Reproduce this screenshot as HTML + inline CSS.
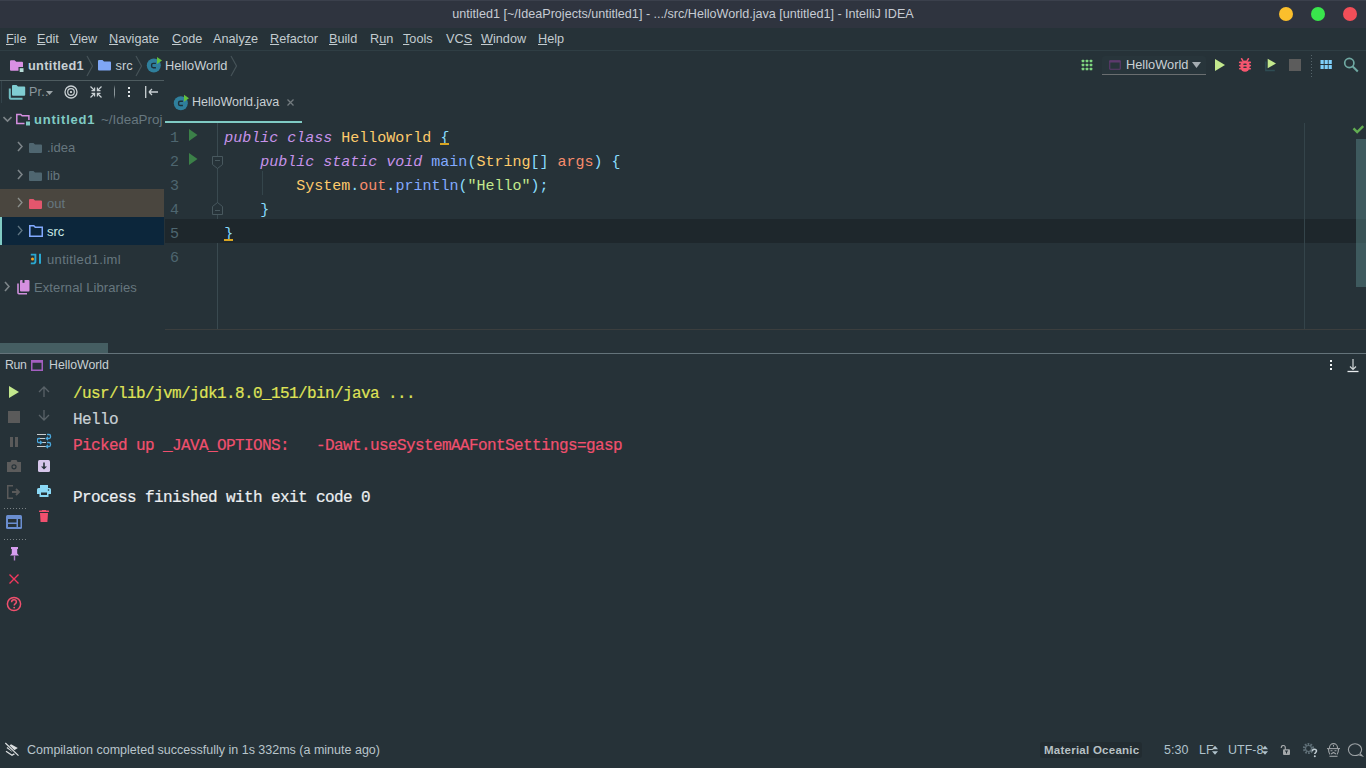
<!DOCTYPE html>
<html><head><meta charset="utf-8">
<style>
*{margin:0;padding:0;box-sizing:border-box}
html,body{width:1366px;height:768px;overflow:hidden;background:#263238;font-family:"Liberation Sans",sans-serif;font-size:13px;color:#b0bec5}
.a{position:absolute;white-space:pre}
.mono{font-family:"Liberation Mono",monospace}
#title{left:0;top:0;width:1366px;height:28px;background:#2f343f}
#menu{left:0;top:28px;width:1366px;height:22px;background:#263238}
.mi{top:32px;font-size:12.7px;color:#c3ccd0}
.mi u{text-decoration:underline;text-decoration-thickness:1px;text-underline-offset:1px}
</style></head><body>
<div id="title" class="a"></div><div class="a" style="left:0;top:0;width:1366px;height:1px;background:#3b404c"></div>
<div class="a" style="left:0;top:7px;width:1366px;text-align:center;font-size:12.6px;color:#c6cbd3">untitled1 [~/IdeaProjects/untitled1] - .../src/HelloWorld.java [untitled1] - IntelliJ IDEA</div>
<div class="a" style="left:1279px;top:7px;width:14px;height:14px;border-radius:7px;background:#fbbf2c"></div>
<div class="a" style="left:1311px;top:7px;width:14px;height:14px;border-radius:7px;background:#39e64c"></div>
<div class="a" style="left:1343px;top:7px;width:14px;height:14px;border-radius:7px;background:#f24e58"></div>

<div id="menu" class="a"></div>
<div class="a mi" style="left:6px"><u>F</u>ile</div>
<div class="a mi" style="left:37px"><u>E</u>dit</div>
<div class="a mi" style="left:70px"><u>V</u>iew</div>
<div class="a mi" style="left:109px"><u>N</u>avigate</div>
<div class="a mi" style="left:172px"><u>C</u>ode</div>
<div class="a mi" style="left:213px">Analy<u>z</u>e</div>
<div class="a mi" style="left:270px"><u>R</u>efactor</div>
<div class="a mi" style="left:329px"><u>B</u>uild</div>
<div class="a mi" style="left:370px">R<u>u</u>n</div>
<div class="a mi" style="left:403px"><u>T</u>ools</div>
<div class="a mi" style="left:446px">VC<u>S</u></div>
<div class="a mi" style="left:481px"><u>W</u>indow</div>
<div class="a mi" style="left:538px"><u>H</u>elp</div>
<div class="a" style="left:0;top:50px;width:1366px;height:1px;background:#2f3e44"></div>


<!-- NAV BAR -->
<svg class="a" style="left:10px;top:60px" width="15" height="13" viewBox="0 0 15 13"><path d="M0 1.2a1 1 0 0 1 1-1h3.6l1.6 1.6H12a1 1 0 0 1 1 1V9.8a1 1 0 0 1-1 1H1a1 1 0 0 1-1-1z" fill="#d990e4"/><rect x="8.5" y="7" width="6" height="6" fill="#263238"/><rect x="9.7" y="8.2" width="3.8" height="3.8" fill="#b7dcd7"/></svg>
<div class="a" style="left:28px;top:58px;font-weight:bold;font-size:12.8px;letter-spacing:0.3px;color:#c8d0d4">untitled1</div>
<svg class="a" style="left:86px;top:55px" width="8" height="22"><path d="M1 1l5.5 10L1 21" stroke="#465358" stroke-width="1.2" fill="none"/></svg>
<svg class="a" style="left:98px;top:60px" width="13" height="11" viewBox="0 0 13 11"><path d="M0 1a1 1 0 0 1 1-1h3.5l1.5 1.5h6a1 1 0 0 1 1 1V9.5a1 1 0 0 1-1 1H1a1 1 0 0 1-1-1z" fill="#7fa6f5"/></svg>
<div class="a" style="left:115.5px;top:58px;font-size:12.8px;color:#c8d0d4">src</div>
<svg class="a" style="left:135px;top:55px" width="8" height="22"><path d="M1 1l5.5 10L1 21" stroke="#465358" stroke-width="1.2" fill="none"/></svg>
<svg class="a" style="left:146px;top:57px" width="17" height="16" viewBox="0 0 17 16"><circle cx="7.8" cy="8.5" r="7" fill="#2f7f9c"/><path d="M9.9 6.4H7.2a1.6 1.6 0 0 0-1.6 1.6v1.1a1.6 1.6 0 0 0 1.6 1.6H9.9" stroke="#1f3038" stroke-width="1.4" fill="none"/><path d="M11 0v7l5-3.5z" fill="#62c03e"/></svg>
<div class="a" style="left:165px;top:58px;font-size:12.8px;color:#c8d0d4">HelloWorld</div>
<svg class="a" style="left:230px;top:55px" width="8" height="22"><path d="M1 1l5.5 10L1 21" stroke="#465358" stroke-width="1.2" fill="none"/></svg>
<div class="a" style="left:0;top:80px;width:164px;height:1px;background:#4e5c60"></div>

<!-- right toolbar -->
<svg class="a" style="left:1081px;top:59px" width="12" height="12" fill="#7fd67f"><rect x="0.7" y="0.7" width="2.6" height="2.6" rx="0.6"/><rect x="0.7" y="4.7" width="2.6" height="2.6" rx="0.6"/><rect x="0.7" y="8.7" width="2.6" height="2.6" rx="0.6"/><rect x="4.7" y="0.7" width="2.6" height="2.6" rx="0.6"/><rect x="4.7" y="4.7" width="2.6" height="2.6" rx="0.6"/><rect x="4.7" y="8.7" width="2.6" height="2.6" rx="0.6"/><rect x="8.7" y="0.7" width="2.6" height="2.6" rx="0.6"/><rect x="8.7" y="4.7" width="2.6" height="2.6" rx="0.6"/><rect x="8.7" y="8.7" width="2.6" height="2.6" rx="0.6"/></svg>
<div class="a" style="left:1102px;top:56px;width:104px;height:18px;background:#28353b;border-radius:3px 3px 0 0"></div><div class="a" style="left:1102px;top:74px;width:104px;height:1px;background:#6a6e70"></div>
<svg class="a" style="left:1109px;top:60px" width="12" height="10"><rect x="0.75" y="0.75" width="10.5" height="8.5" rx="0.5" fill="none" stroke="#5e3a6e" stroke-width="1.1"/><rect x="0.5" y="0.5" width="11" height="2" fill="#5e3a6e"/></svg>
<div class="a" style="left:1126px;top:57px;font-size:12.8px;color:#c8d0d4">HelloWorld</div>
<svg class="a" style="left:1192px;top:62px" width="9" height="6"><path d="M0 0h9l-4.5 6z" fill="#a5adb2"/></svg>
<svg class="a" style="left:1215px;top:59px" width="10" height="12"><path d="M0 0l10 6-10 6z" fill="#c3e88d"/></svg>
<svg class="a" style="left:1238px;top:58px" width="14" height="14" viewBox="0 0 14 14"><g fill="#f5566f"><ellipse cx="7" cy="8.1" rx="4.7" ry="5.7"/><rect x="0.9" y="3.6" width="12.2" height="1.6" rx="0.8"/><rect x="0.9" y="6.8" width="12.2" height="1.6" rx="0.8"/><rect x="0.9" y="9.9" width="12.2" height="1.6" rx="0.8"/></g><path d="M3.6 0.8l1.2 1.8M10.4 0.8l-1.2 1.8" stroke="#f5566f" stroke-width="1.6" stroke-linecap="round"/><ellipse cx="7" cy="6.3" rx="1.9" ry="0.75" fill="#263238"/><ellipse cx="7" cy="9.3" rx="1.9" ry="0.75" fill="#263238"/></svg>
<svg class="a" style="left:1264px;top:58px" width="14" height="14"><path d="M1.8 3.5v9h9" stroke="#2f4d54" stroke-width="1.4" fill="none"/><path d="M3.7 0.8l8.3 4.7-8.3 4.7z" fill="#c3e88d"/></svg>
<div class="a" style="left:1289px;top:59px;width:12px;height:12px;background:#5c5c5c"></div>
<div class="a" style="left:1311px;top:55px;width:1px;height:22px;background:repeating-linear-gradient(#56656b 0 1px,transparent 1px 3px)"></div>
<svg class="a" style="left:1320px;top:60px" width="12" height="9" fill="#7fd0fa"><rect x="0.5" y="0" width="3.2" height="4"/><rect x="4.6" y="0" width="3.2" height="4"/><rect x="8.6" y="0" width="3.2" height="4"/><rect x="0.5" y="5" width="3.2" height="4"/><rect x="4.6" y="5" width="3.2" height="4"/><rect x="8.6" y="5" width="3.2" height="4"/></svg>
<svg class="a" style="left:1342px;top:56px" width="17" height="17"><circle cx="7.3" cy="7" r="4.6" stroke="#6fa8a2" stroke-width="1.7" fill="none"/><path d="M10.5 10.3l5.3 5.2" stroke="#6fa8a2" stroke-width="2"/></svg>

<!-- PROJECT PANEL -->
<div class="a" style="left:1px;top:81px;width:1px;height:22px;background:#33434a"></div>
<svg class="a" style="left:8px;top:84px" width="19" height="16" viewBox="0 0 19 16"><path d="M1.8 4.5v9.2a1 1 0 0 0 1 1H14.5" stroke="#72bfc3" stroke-width="2" fill="none"/><path d="M4 2a1 1 0 0 1 1-1h3.5l1.5 1.5h6.2a1 1 0 0 1 1 1V10.8a1 1 0 0 1-1 1H5a1 1 0 0 1-1-1z" fill="#80cdd2"/></svg>
<div class="a" style="left:29px;top:85px;font-size:12.6px;letter-spacing:0.2px;color:#8a979d">Pr..</div>
<svg class="a" style="left:46px;top:91px" width="7" height="4"><path d="M0 0h7l-3.5 4z" fill="#9aa3a7"/></svg>
<svg class="a" style="left:64px;top:85px" width="14" height="14"><circle cx="7" cy="7" r="6" stroke="#c9d0d3" stroke-width="1.3" fill="none"/><circle cx="7" cy="7" r="3.3" stroke="#c9d0d3" stroke-width="1.2" fill="none"/><circle cx="7" cy="7" r="1.1" fill="#e0e4e6"/></svg>
<svg class="a" style="left:90px;top:86px" width="12" height="12" stroke="#c9d0d3" stroke-width="1.2" fill="none"><path d="M0.5 0.5l4 4M1.5 4.6h3.1V1.5M11.5 0.5l-4 4M10.5 4.6H7.4V1.5M0.5 11.5l4-4M1.5 7.4h3.1v3.1M11.5 11.5l-4-4M10.5 7.4H7.4v3.1"/></svg>
<div class="a" style="left:114px;top:85px;width:1px;height:14px;background:linear-gradient(#263238,#8c979b 30%,#8c979b 70%,#263238)"></div>
<div class="a" style="left:128px;top:87px;width:2px;height:2px;background:#e0e4e6"></div>
<div class="a" style="left:128px;top:91px;width:2px;height:2px;background:#e0e4e6"></div>
<div class="a" style="left:128px;top:95px;width:2px;height:2px;background:#e0e4e6"></div>
<svg class="a" style="left:145px;top:86px" width="13" height="12" stroke="#c9d0d3" stroke-width="1.3" fill="none"><path d="M0.7 0v12M4 6h9M4 6l3-3M4 6l3 3"/></svg>

<!-- tree -->
<svg class="a" style="left:3px;top:116px" width="9" height="7"><path d="M0.5 1l4 4 4-4" stroke="#7d8589" stroke-width="1.6" fill="none"/></svg>
<svg class="a" style="left:16px;top:113px" width="15" height="13" viewBox="0 0 15 13"><path d="M0.8 1.5h4l1.3 1.3h6.8V10.5H0.8z" stroke="#d58fe0" stroke-width="1.5" fill="none"/><rect x="8.5" y="7" width="6.5" height="6" fill="#263238"/><rect x="10" y="8.5" width="4" height="4" fill="#80cbc4"/></svg>
<div class="a" style="left:34px;top:112px;font-weight:bold;font-size:13px;letter-spacing:0.8px;color:#80cbc4">untitled1</div>
<div class="a" style="left:101px;top:112px;font-size:13.4px;color:#66777f;width:63px;overflow:hidden">~/IdeaProj</div>

<div class="a" style="left:0;top:189px;width:164px;height:28px;background:#4a463f"></div>
<div class="a" style="left:0;top:217px;width:164px;height:28px;background:#0c263b"></div>
<div class="a" style="left:0;top:217px;width:2px;height:28px;background:#80cbc4"></div>

<svg class="a" style="left:17px;top:141px" width="6" height="11"><path d="M1 1l4 4.5-4 4.5" stroke="#7d8589" stroke-width="1.6" fill="none"/></svg>
<svg class="a" style="left:29px;top:143px" width="13" height="10"><path d="M0 1a1 1 0 0 1 1-1h3.5l1.5 1.5h6a1 1 0 0 1 1 1V9a1 1 0 0 1-1 1H1a1 1 0 0 1-1-1z" fill="#4f6670" transform="translate(0,0)"/></svg>
<div class="a" style="left:47px;top:140px;font-size:13px;color:#66777f">.idea</div>

<svg class="a" style="left:17px;top:169px" width="6" height="11"><path d="M1 1l4 4.5-4 4.5" stroke="#7d8589" stroke-width="1.6" fill="none"/></svg>
<svg class="a" style="left:29px;top:171px" width="13" height="10"><path d="M0 1a1 1 0 0 1 1-1h3.5l1.5 1.5h6a1 1 0 0 1 1 1V9a1 1 0 0 1-1 1H1a1 1 0 0 1-1-1z" fill="#4f6670"/></svg>
<div class="a" style="left:47px;top:168px;font-size:13px;color:#66777f">lib</div>

<svg class="a" style="left:17px;top:197px" width="6" height="11"><path d="M1 1l4 4.5-4 4.5" stroke="#8a8f8c" stroke-width="1.3" fill="none"/></svg>
<svg class="a" style="left:29px;top:199px" width="13" height="10"><path d="M0 1a1 1 0 0 1 1-1h3.5l1.5 1.5h6a1 1 0 0 1 1 1V9a1 1 0 0 1-1 1H1a1 1 0 0 1-1-1z" fill="#e3566d"/></svg>
<div class="a" style="left:47px;top:196px;font-size:13px;color:#66777f">out</div>

<svg class="a" style="left:17px;top:225px" width="6" height="11"><path d="M1 1l4 4.5-4 4.5" stroke="#5f7582" stroke-width="1.3" fill="none"/></svg>
<svg class="a" style="left:29px;top:225px" width="14" height="12"><path d="M0.8 0.8h4l1.5 1.5h7V11.2H0.8z" stroke="#82aaff" stroke-width="1.6" fill="none"/></svg>
<div class="a" style="left:47px;top:224px;font-size:13px;color:#c9e9e6">src</div>

<svg class="a" style="left:30px;top:253px" width="13" height="12"><path d="M0.8 1.6h4.6v6.6a2.2 2.2 0 0 1-2.2 2.2H0.8" stroke="#2aa8d0" stroke-width="1.9" fill="none"/><circle cx="2.5" cy="6" r="1.5" fill="#f5a623"/><path d="M10 0.8v10" stroke="#2aa8d0" stroke-width="2"/></svg>
<div class="a" style="left:47px;top:252px;font-size:13px;letter-spacing:0.35px;color:#66777f">untitled1.iml</div>

<svg class="a" style="left:4px;top:281px" width="6" height="11"><path d="M1 1l4 4.5-4 4.5" stroke="#7d8589" stroke-width="1.6" fill="none"/></svg>
<svg class="a" style="left:16px;top:279px" width="15" height="16"><path d="M2 4.5v9.3a1 1 0 0 0 1 1H11" stroke="#cf8fdc" stroke-width="1.6" fill="none"/><path d="M4 2a1 1 0 0 1 1-1h7.5a1 1 0 0 1 1 1v9.5a1 1 0 0 1-1 1H5a1 1 0 0 1-1-1z" fill="#d690e0"/><path d="M6.5 1v2.8h2V1z" fill="#263238"/></svg>
<div class="a" style="left:34px;top:280px;font-size:13px;letter-spacing:0.1px;color:#66777f">External Libraries</div>

<div class="a" style="left:0;top:343px;width:108px;height:10px;background:#455e62"></div>
<div class="a" style="left:164px;top:81px;width:1px;height:272px;background:#263238"></div>

<!-- EDITOR -->
<svg class="a" style="left:173px;top:94px" width="17" height="17" viewBox="0 0 17 17"><circle cx="7.8" cy="9.3" r="7" fill="#2f7f9c"/><path d="M9.9 7.2H7.2a1.6 1.6 0 0 0-1.6 1.6v1.1a1.6 1.6 0 0 0 1.6 1.6H9.9" stroke="#1f3038" stroke-width="1.4" fill="none"/><path d="M11 0.8v7l5-3.5z" fill="#62c03e"/></svg>
<div class="a" style="left:192px;top:95px;font-size:12.5px;color:#c8d0d4">HelloWorld.java</div>
<svg class="a" style="left:287px;top:99px" width="7" height="7"><path d="M0.5 0.5l6 6M6.5 0.5l-6 6" stroke="#737b7f" stroke-width="1.3"/></svg>
<div class="a" style="left:165px;top:121px;width:137px;height:2px;background:#80cbc4"></div>
<div class="a" style="left:217px;top:123px;width:1px;height:206px;background:#3a4a50"></div>
<div class="a" style="left:165px;top:219px;width:1201px;height:24px;background:#1e272c"></div>
<div class="a" style="left:1304px;top:123px;width:1px;height:206px;background:#34444a"></div>
<div class="a" style="left:165px;top:329px;width:1201px;height:1px;background:#3b3e3e"></div>
<div class="a" style="left:1356px;top:139px;width:10px;height:148px;background:rgba(109,167,165,0.35)"></div>
<svg class="a" style="left:1352px;top:124px" width="13" height="12"><path d="M1.5 4.3l3.7 3.8 6-6" stroke="#62ad52" stroke-width="2.4" fill="none"/></svg>

<div class="a mono" style="left:169px;top:127px;font-size:15px;line-height:24px;color:#4e6670;text-align:right;width:10px">1
2
3
4
5
6</div>
<svg class="a" style="left:189px;top:129px" width="9" height="12"><path d="M0 0l8.5 6L0 12z" fill="#3b8048"/></svg>
<svg class="a" style="left:189px;top:153px" width="9" height="12"><path d="M0 0l8.5 6L0 12z" fill="#3b8048"/></svg>
<svg class="a" style="left:212px;top:156px" width="11" height="13"><path d="M0.5 0.5h10v8l-5 4-5-4z" fill="#263238" stroke="#48585e"/><path d="M3 4.5h5" stroke="#48585e"/></svg>
<svg class="a" style="left:212px;top:202px" width="11" height="13"><path d="M0.5 12.5h10v-8l-5-4-5 4z" fill="#263238" stroke="#48585e"/><path d="M3 8.5h5" stroke="#48585e"/></svg>
<div class="a" style="left:262px;top:171px;width:1px;height:24px;background:#34454b"></div>

<div class="a mono" style="left:224.3px;top:127px;font-size:15px;line-height:24px;color:#89ddff"><i style="color:#c792ea">public class</i> <span style="color:#ffcb6b">HelloWorld</span> <span style="color:#89ddff">{</span>
    <i style="color:#c792ea">public static void</i> <span style="color:#82aaff">main</span>(<span style="color:#ffcb6b">String</span>[] <span style="color:#f78c6c">args</span>) {
        <span style="color:#ffcb6b">System</span>.<span style="color:#f78c6c">out</span>.<span style="color:#82aaff">println</span>(<span style="color:#c3e88d">"Hello"</span>);
    }
<span style="color:#89ddff">}</span>
</div>
<div class="a" style="left:440px;top:143px;width:9px;height:2px;background:#d9a521"></div>
<div class="a" style="left:224px;top:239px;width:9px;height:2px;background:#d9a521"></div>

<!-- RUN PANEL -->
<div class="a" style="left:0;top:353px;width:1366px;height:1px;background:#64737a"></div>
<div class="a" style="left:5px;top:358px;font-size:12.3px;letter-spacing:-0.4px;color:#c8d0d4">Run</div>
<svg class="a" style="left:31px;top:360px" width="12" height="11"><rect x="0.75" y="0.75" width="10.5" height="9.5" fill="none" stroke="#a35fc0" stroke-width="1.5"/><rect x="0.75" y="0.75" width="10.5" height="2" fill="#a35fc0"/></svg>
<div class="a" style="left:49px;top:358px;font-size:12.3px;color:#c8d0d4">HelloWorld</div>
<div class="a" style="left:1330px;top:360px;width:2px;height:2px;background:#eef2f3"></div>
<div class="a" style="left:1330px;top:364px;width:2px;height:2px;background:#eef2f3"></div>
<div class="a" style="left:1330px;top:368px;width:2px;height:2px;background:#eef2f3"></div>
<svg class="a" style="left:1347px;top:359px" width="12" height="14"><path d="M6 0v10M3 7.5l3 3 3-3" stroke="#d0d6d8" stroke-width="1.2" fill="none"/><path d="M0.5 12.5h11" stroke="#e8ecee" stroke-width="1.3"/></svg>

<svg class="a" style="left:9px;top:386px" width="10" height="12"><path d="M0 0l10 6-10 6z" fill="#c3e88d"/></svg>
<div class="a" style="left:8px;top:411px;width:12px;height:12px;background:#5a5a5a"></div>
<div class="a" style="left:10px;top:437px;width:3px;height:10px;background:#5a5a5a"></div>
<div class="a" style="left:15px;top:437px;width:3px;height:10px;background:#5a5a5a"></div>
<svg class="a" style="left:7px;top:460px" width="14" height="12"><path d="M4.5 0h5l1 2H14v10H0V2h3.5z" fill="#5c5c5c"/><circle cx="7" cy="6.8" r="2.6" fill="#263238"/><circle cx="7" cy="6.8" r="1.4" fill="#5c5c5c"/></svg>
<svg class="a" style="left:7px;top:485px" width="14" height="14"><path d="M6 0.75H0.75v12.5H6" stroke="#5a5a5a" stroke-width="1.5" fill="none"/><path d="M5 7h6M9 4l3 3-3 3" stroke="#5a5a5a" stroke-width="1.8" fill="none"/></svg>
<div class="a" style="left:4px;top:508px;width:22px;height:1px;background:repeating-linear-gradient(90deg,#7a8286 0 1px,transparent 1px 3px)"></div>
<svg class="a" style="left:6px;top:515px" width="16" height="14"><rect x="0" y="0" width="16" height="14" rx="1.5" fill="#6a8ed0"/><rect x="2" y="4" width="8.5" height="3.5" fill="#263238"/><rect x="2" y="9" width="8.5" height="3" fill="#263238"/><rect x="12" y="4" width="2.5" height="8" fill="#263238"/></svg>
<div class="a" style="left:4px;top:539px;width:22px;height:1px;background:repeating-linear-gradient(90deg,#7a8286 0 1px,transparent 1px 3px)"></div>
<svg class="a" style="left:10px;top:547px" width="9" height="14"><path d="M1 0h7v2h-0.8v4.5L9 8.5H0L1.8 6.5V2H1z" fill="#d79ef0"/><rect x="3.8" y="8.5" width="1.4" height="5" fill="#b07cc8"/></svg>
<svg class="a" style="left:9px;top:574px" width="10" height="10"><path d="M0.5 0.5l9 9M9.5 0.5l-9 9" stroke="#f2385e" stroke-width="1.4"/></svg>
<svg class="a" style="left:6px;top:596px" width="16" height="16"><circle cx="8" cy="8" r="6.6" stroke="#f0506e" stroke-width="1.5" fill="none"/><path d="M5.6 6.2c0-1.5 1-2.4 2.4-2.4s2.4 0.9 2.4 2.2c0 1.6-2.2 1.7-2.2 3.4" stroke="#f0506e" stroke-width="1.5" fill="none"/><circle cx="8.2" cy="11.6" r="0.95" fill="#f0506e"/></svg>

<svg class="a" style="left:38px;top:386px" width="12" height="11"><path d="M6 11V1M1 6l5-5 5 5" stroke="#596268" stroke-width="1.3" fill="none"/></svg>
<svg class="a" style="left:38px;top:410px" width="12" height="11"><path d="M6 0v10M1 5l5 5 5-5" stroke="#596268" stroke-width="1.3" fill="none"/></svg>
<svg class="a" style="left:37px;top:433px" width="15" height="16"><path d="M0 1.5h9M3 5.5h5M4 9.5h5M0 13.5h9" stroke="#c7cdd0" stroke-width="1.1"/><g stroke="#4aa8de" stroke-width="1.3" fill="none"><path d="M10 1.5h2a1.5 1.5 0 0 1 1.5 1.5v1a1.5 1.5 0 0 1-1.5 1.5H10"/><path d="M3 5.5H1.8a1.5 1.5 0 0 0-1.5 1.5v1a1.5 1.5 0 0 0 1.5 1.5H3"/><path d="M10 9.5h2a1.5 1.5 0 0 1 1.5 1.5v1a1.5 1.5 0 0 1-1.5 1.5H10"/></g><g fill="#4aa8de"><path d="M11 3.2L8.2 5.5 11 7.8z"/><path d="M3 7.2l2.8 2.3L3 11.8z"/><path d="M11 11.2l-2.8 2.3 2.8 2.3z"/></g></svg>
<svg class="a" style="left:38px;top:460px" width="12" height="12"><rect width="12" height="12" rx="1.5" fill="#d6c6ea"/><path d="M6 2.5v5" stroke="#263238" stroke-width="1.6"/><path d="M3 6.5h6l-3 3z" fill="#263238"/></svg>
<svg class="a" style="left:37px;top:485px" width="14" height="12"><rect x="3" y="0" width="8" height="3" fill="#8ad8f5"/><path d="M0 4.5a1.5 1.5 0 0 1 1.5-1.5h11a1.5 1.5 0 0 1 1.5 1.5V9h-2.5v3h-9V9H0z" fill="#8ad8f5"/><rect x="4" y="7.5" width="6" height="2.5" fill="#263238"/><circle cx="11.5" cy="5" r="0.8" fill="#263238"/></svg>
<svg class="a" style="left:39px;top:510px" width="10" height="12"><rect x="0" y="0.5" width="10" height="1.5" rx="0.5" fill="#f0506e"/><rect x="3" y="0" width="4" height="1" fill="#f0506e"/><path d="M1 3h8l-0.6 9H1.6z" fill="#f0506e"/></svg>

<div class="a mono" style="left:73px;top:381px;font-size:16px;letter-spacing:-0.6px;line-height:26px;color:#eceff1;-webkit-text-stroke:0.2px currentColor"><span style="color:#dfe256">/usr/lib/jvm/jdk1.8.0_151/bin/java ...</span>
<span style="color:#c9d1d5">Hello</span>
<span style="color:#f0506e">Picked up _JAVA_OPTIONS:   -Dawt.useSystemAAFontSettings=gasp</span>

Process finished with exit code 0</div>

<!-- STATUS BAR -->
<svg class="a" style="left:0;top:738px" width="22" height="22"><path d="M6.5 10L11 6.2 17.8 10 12 13.8z" fill="#dcdfe0"/><path d="M6 13.3l6 4 2.6-1.7" stroke="#dcdfe0" stroke-width="1.3" fill="none"/><path d="M4.8 4.6l13.8 13.3" stroke="#263238" stroke-width="2.6"/><path d="M5.3 5l13.2 12.6" stroke="#dcdfe0" stroke-width="1.2"/></svg>
<div class="a" style="left:27px;top:743px;font-size:12.5px;color:#b9c5cb">Compilation completed successfully in 1s 332ms (a minute ago)</div>
<div class="a" style="left:1040px;top:742px;width:102px;height:16px;border-radius:3px;background:#222c31"></div>
<div class="a" style="left:1044px;top:744px;font-size:11.5px;font-weight:bold;letter-spacing:0.25px;color:#b7c0c4">Material Oceanic</div>
<div class="a" style="left:1164px;top:743px;font-size:12.5px;color:#b0c2cc">5:30</div>
<div class="a" style="left:1199px;top:743px;font-size:12.5px;color:#b0c2cc">LF</div>
<svg class="a" style="left:1212px;top:745px" width="6" height="11"><path d="M0 4.3L3 0.8 6 4.3zM0 6.2l3 3.5 3-3.5z" fill="#b0c2cc"/></svg>
<div class="a" style="left:1228px;top:743px;font-size:12.5px;color:#b0c2cc">UTF-8</div>
<svg class="a" style="left:1262px;top:745px" width="6" height="11"><path d="M0 4.3L3 0.8 6 4.3zM0 6.2l3 3.5 3-3.5z" fill="#b0c2cc"/></svg>
<svg class="a" style="left:1280px;top:745px" width="11" height="11"><path d="M1.3 3V2.5a2 2 0 0 1 4 0V5" stroke="#a3a7a9" stroke-width="1.2" fill="none"/><rect x="3" y="4.2" width="7" height="5.8" rx="1" fill="#a3a7a9"/><path d="M5 6h3M6.5 6v2.5" stroke="#263238" stroke-width="1"/></svg>
<svg class="a" style="left:1302px;top:742px" width="17" height="16"><circle cx="6.5" cy="6.5" r="4.3" stroke="#5f6f77" stroke-width="2.6" fill="none" stroke-dasharray="1.6 1.1"/><circle cx="6.5" cy="6.5" r="3" stroke="#5f6f77" stroke-width="1.2" fill="none"/><path d="M10.3 9.3c0-1.3 0.9-2.1 2.1-2.1s2.1 0.8 2.1 1.9c0 1.3-1.7 1.5-1.7 2.8" stroke="#c0ccd2" stroke-width="1.5" fill="none"/><circle cx="12.8" cy="14.3" r="1" fill="#c0ccd2"/></svg>
<svg class="a" style="left:1327px;top:743px" width="13" height="14"><path d="M2.5 5.5V4.6a4 4 0 0 1 8 0v0.9" stroke="#9ea3a6" stroke-width="1.1" fill="none"/><path d="M0 5.6h13" stroke="#9ea3a6" stroke-width="1.1"/><path d="M6.5 2v1.6" stroke="#9ea3a6" stroke-width="1"/><path d="M1.5 6c0 2 0.3 4 1.5 5.5M11.5 6c0 2-0.3 4-1.5 5.5" stroke="#9ea3a6" stroke-width="1.1" fill="none"/><path d="M3.5 7.8h2M7.5 7.8h2" stroke="#9ea3a6" stroke-width="1.1"/><path d="M4 11l2.5-1.5L9 11" stroke="#9ea3a6" stroke-width="1.1" fill="none"/><path d="M2.5 13.3h8" stroke="#9ea3a6" stroke-width="1.1"/></svg>
<svg class="a" style="left:1347px;top:743px" width="17" height="14"><path d="M8 0.8c3.6 0 6.6 2.6 6.6 5.8 0 1.4-0.6 2.7-1.6 3.7l2.3 2.6-3.6-1.2c-1.1 0.5-2.3 0.8-3.7 0.8-3.6 0-6.6-2.6-6.6-5.9S4.4 0.8 8 0.8z" stroke="#9ea3a6" stroke-width="1.1" fill="none"/></svg>
</body></html>
